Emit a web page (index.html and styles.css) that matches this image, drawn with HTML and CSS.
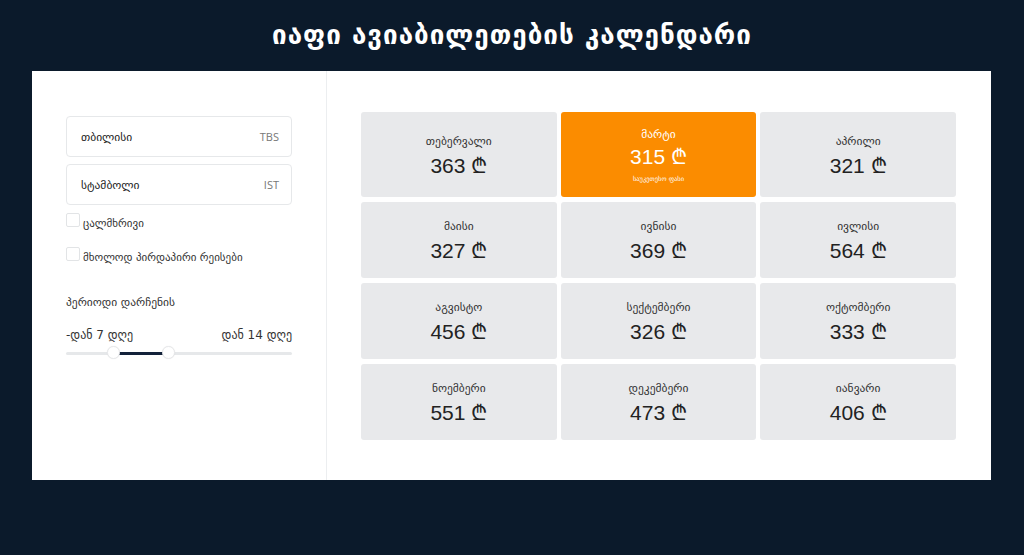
FILE: index.html
```html
<!DOCTYPE html>
<html lang="ka">
<head>
<meta charset="utf-8">
<link rel="stylesheet" href="styles.css">
</head>
<body>
<h1 class="title">იაფი ავიაბილეთების კალენდარი</h1>
<div class="card">
  <aside class="side">
    <div class="field"><span>თბილისი</span><span class="code">TBS</span></div>
    <div class="field"><span>სტამბოლი</span><span class="code">IST</span></div>
    <label class="check"><span class="box"></span>ცალმხრივი</label>
    <label class="check"><span class="box"></span>მხოლოდ პირდაპირი რეისები</label>
    <div class="period">პერიოდი დარჩენის</div>
    <div class="range"><span>-დან 7 დღე</span><span>დან 14 დღე</span></div>
    <div class="slider">
      <div class="fill"></div>
      <span class="knob k1"></span>
      <span class="knob k2"></span>
    </div>
  </aside>
  <main class="main">
    <div class="grid">
      <div class="cell tall"><div class="m">თებერვალი</div><div class="p">363 ₾</div></div>
      <div class="cell hot"><div class="m">მარტი</div><div class="p">315 ₾</div><div class="s">საუკეთესო ფასი</div></div>
      <div class="cell tall"><div class="m">აპრილი</div><div class="p">321 ₾</div></div>
      <div class="cell"><div class="m">მაისი</div><div class="p">327 ₾</div></div>
      <div class="cell"><div class="m">ივნისი</div><div class="p">369 ₾</div></div>
      <div class="cell"><div class="m">ივლისი</div><div class="p">564 ₾</div></div>
      <div class="cell"><div class="m">აგვისტო</div><div class="p">456 ₾</div></div>
      <div class="cell"><div class="m">სექტემბერი</div><div class="p">326 ₾</div></div>
      <div class="cell"><div class="m">ოქტომბერი</div><div class="p">333 ₾</div></div>
      <div class="cell"><div class="m">ნოემბერი</div><div class="p">551 ₾</div></div>
      <div class="cell"><div class="m">დეკემბერი</div><div class="p">473 ₾</div></div>
      <div class="cell"><div class="m">იანვარი</div><div class="p">406 ₾</div></div>
    </div>
  </main>
</div>
</body>
</html>
```
FILE: styles.css
```css
html, body { margin: 0; padding: 0; }
body {
  background: #0b1a2b;
  width: 1024px;
  height: 555px;
  overflow: hidden;
  font-family: "DejaVu Sans", "Noto Sans", sans-serif;
  color: #222;
}
.title {
  margin: 0;
  height: 71px;
  line-height: 71px;
  text-align: center;
  color: #fff;
  font-size: 26px;
  font-weight: bold;
  letter-spacing: 1px;
}
.card {
  margin: 0 33px 0 32px;
  height: 409px;
  background: #fff;
  display: flex;
}
.side {
  width: 226px;
  padding: 45px 34px 0 34px;
  border-right: 1px solid #eceef0;
  display: flex;
  flex-direction: column;
}
.field {
  height: 39px;
  border: 1px solid #e6e8ea;
  border-radius: 4px;
  display: flex;
  align-items: center;
  justify-content: space-between;
  padding: 0 12px 0 14px;
  font-size: 11.5px;
  color: #222;
  margin-bottom: 7px;
}
.field .code {
  font-family: "Open Sans", "Liberation Sans", sans-serif;
  font-size: 11px;
  color: #777;
}
.check {
  display: flex;
  align-items: flex-start;
  font-size: 11px;
  color: #333;
  height: 14px;
  line-height: 14px;
  margin-top: 5px;
  margin-bottom: 15px;
}
.check .box {
  width: 12px;
  height: 12px;
  border: 1px solid #e2e4e6;
  border-radius: 2px;
  margin-right: 3px;
  margin-top: -4px;
  background: #fff;
}
.period {
  margin-top: 15px;
  font-size: 11.5px;
  color: #333;
}
.range {
  margin-top: 19px;
  display: flex;
  justify-content: space-between;
  font-size: 12px;
  color: #333;
}
.slider {
  position: relative;
  margin-top: 10px;
  height: 3px;
  background: #e6e8ea;
  border-radius: 2px;
}
.fill {
  position: absolute;
  left: 53px;
  width: 46px;
  top: 0;
  height: 3px;
  background: #13223a;
}
.knob {
  position: absolute;
  top: -6px;
  width: 13px;
  height: 13px;
  border-radius: 50%;
  background: #fff;
  border: 1px solid #e8e9eb;
  box-sizing: border-box;
  box-shadow: 0 0 1px rgba(0,0,0,0.1);
}
.k1 { left: 41px; }
.k2 { left: 96px; }
.main {
  flex: 1;
  padding: 41px 35px 0 34px;
}
.grid {
  display: grid;
  grid-template-columns: repeat(3, 1fr);
  grid-template-rows: 85px 76px 76px 76px;
  gap: 5px 4px;
}
.cell {
  background: #e8e9eb;
  border-radius: 3px;
  display: flex;
  flex-direction: column;
  align-items: center;
  padding-top: 16px;
  box-sizing: border-box;
}
.cell.tall { padding-top: 21px; }
.hot {
  background: #fb8c00;
  color: #fff;
  padding-top: 14px;
}
.m {
  font-size: 11.5px;
  line-height: 16px;
  color: #333;
}
.hot .m { color: #fff; }
.p {
  font-family: "Liberation Sans", Arial, sans-serif;
  font-size: 21px;
  line-height: 30px;
  margin-top: 2px;
  color: #222;
}
.hot .p { color: #fff; margin-top: 0; }
.s {
  font-size: 6.5px;
  line-height: 14px;
  color: #fff;
}
```
